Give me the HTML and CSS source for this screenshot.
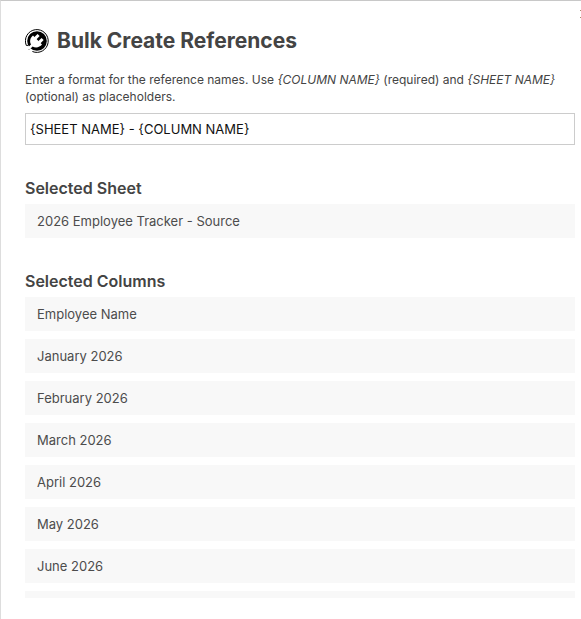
FILE: index.html
```html
<!DOCTYPE html>
<html lang="en">
<head>
<meta charset="utf-8">
<title>Bulk Create References</title>
<link rel="stylesheet" href="styles.css">
</head>
<body>
<main class="dialog">
  <button class="close" type="button" aria-label="Close">
    <svg viewBox="0 0 10 10" aria-hidden="true"><path d="M1 1l8 8M9 1L1 9"/></svg>
  </button>
  <header class="header">
    <svg class="logo" viewBox="0 0 24 24" aria-hidden="true">
      <path class="ring" d="M1.3 16.4A11.4 11.4 0 1 1 7.4 22.5M1.3 16.4l1.6 .2M4 20.6l1.2-1.4"/>
      <circle cx="12" cy="12" r="9.8"/>
      <path class="plug" d="M8 6.6L17 15.6C14.6 18.6 10.4 19.2 7.6 17.4L4.6 20.4L2.8 18.6L6 15.6C4.400 12.600 5 9 8 6.600z"/>
      <path class="prong" d="M10 9.600L13.600 6M14 13.600L17.600 10"/>
    </svg>
    <h1>Bulk Create References</h1>
  </header>
  <label class="hint" for="format">Enter a format for the reference names. Use <em>{COLUMN NAME}</em> (required) and <em>{SHEET NAME}</em> (optional) as placeholders.</label>
  <input class="format" id="format" type="text" value="{SHEET NAME} - {COLUMN NAME}">
  <h2>Selected Sheet</h2>
  <ul class="list">
    <li>2026 Employee Tracker - Source</li>
  </ul>
  <h2>Selected Columns</h2>
  <ul class="list columns">
    <li>Employee Name</li>
    <li>January 2026</li>
    <li>February 2026</li>
    <li>March 2026</li>
    <li>April 2026</li>
    <li>May 2026</li>
    <li>June 2026</li>
    <li></li>
  </ul>
</main>
</body>
</html>
```
FILE: styles.css
```css
* {
  box-sizing: border-box;
}

body {
  margin: 0;
  background: #fff;
  color: #444;
  font: 13px/18px Inter, "Liberation Sans", sans-serif;
}

.dialog {
  position: relative;
  display: flex;
  flex-direction: column;
  height: 100vh;
  padding: 24px 6px 21px 24px;
  border-top: 1px solid #c8c8c8;
  border-left: 1px solid #ddd;
  overflow: hidden;
}

.close {
  position: absolute;
  top: 8px;
  right: -8px;
  width: 10px;
  height: 10px;
  padding: 0;
  border: 0;
  background: none;
}

.close svg {
  display: block;
  fill: none;
  stroke: #a98d6c;
  stroke-width: 1;
}

.header {
  display: flex;
  align-items: center;
  gap: 8px;
  height: 32px;
  margin-bottom: 14px;
}

.logo {
  width: 24px;
  height: 24px;
  fill: #000;
}

.logo .ring {
  fill: none;
  stroke: #000;
  stroke-width: 1;
}

.logo .plug {
  fill: #fff;
}

.logo .prong {
  fill: none;
  stroke: #fff;
  stroke-width: 3;
}

h1 {
  margin: 0;
  font-size: 21px;
  line-height: 32px;
  font-weight: 700;
}

.hint {
  margin-bottom: 8px;
  font-size: 12px;
  line-height: 17px;
}

.format {
  width: 100%;
  height: 32px;
  padding: 0 4px;
  border: 1px solid #ccc;
  background: #fff;
  color: #111;
  font: inherit;
}

h2 {
  margin: 31px 0 4px;
  font-size: 16px;
  line-height: 24px;
  font-weight: 600;
}

.list {
  display: flex;
  flex-direction: column;
  gap: 8px;
  margin: 0;
  padding: 0;
  list-style: none;
}

.list li {
  flex: none;
  height: 34px;
  padding: 8px 12px;
  background: #f8f8f8;
  color: #4c4c4c;
}

.columns {
  flex: 1;
  min-height: 0;
  overflow: hidden;
}
```
